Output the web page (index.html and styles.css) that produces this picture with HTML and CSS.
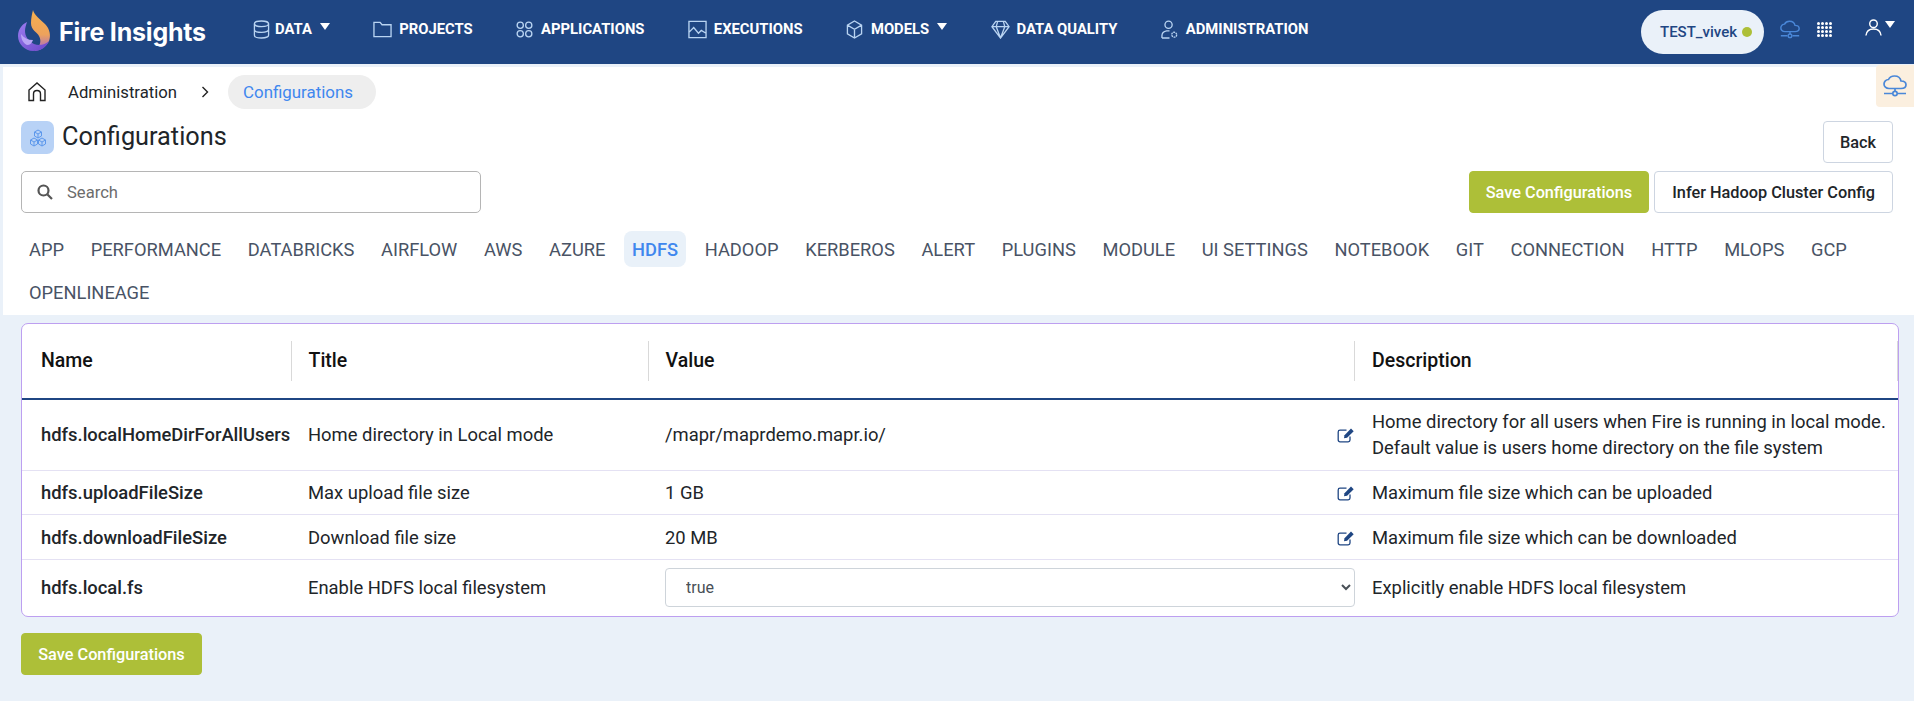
FILE: index.html
```html
<!DOCTYPE html>
<html lang="en">

<head>
	<meta charset="UTF-8">
	<title>Fire Insights - Configurations</title>
	<link rel="stylesheet" href="styles.css">
</head>

<body>
	<header class="topbar">
		<div class="brand">
			<svg class="brand__logo" viewBox="0 0 33 41" width="33" height="41">
				<defs>
					<linearGradient id="flame" x1="0" y1="0" x2="0" y2="1">
						<stop offset="0" stop-color="#f6b04e" />
						<stop offset="0.6" stop-color="#eda25c" />
						<stop offset="1" stop-color="#a065d0" />
					</linearGradient>
					<linearGradient id="blob" x1="0" y1="0" x2="1" y2="1">
						<stop offset="0" stop-color="#9a7cf0" />
						<stop offset="1" stop-color="#6b46c8" />
					</linearGradient>
				</defs>
				<path fill="url(#flame)" d="M15 0C16 5 22 9 27 14C32 19 33 26 31 31C28 37 22 41 16 41C22 37 24 31 21 26C19 22 13 20 13 13C13 8 14 4 15 0z" />
				<path fill="url(#blob)" d="M9 12C3 15 0 20 0 26C0 34 7 41 15 41C22 41 28 38 31 31C27 35 21 36 16 34C10 31 7 26 7 21C7 18 8 15 9 12z" />
				<path fill="#b9a4f5" d="M3 24C6 28 10 30 15 30C14 33 12 35 9 35C5 33 3 29 3 24z" />
			</svg>
			<span class="brand__name">Fire Insights</span>
		</div>
		<nav class="mainnav">
			<a class="mainnav__item">
				<svg class="navicon navicon--tight" viewBox="0 0 18 20"><ellipse cx="9" cy="4" rx="7.5" ry="3" /><path d="M1.500 4v12c0 1.700 3.400 3 7.500 3s7.500-1.300 7.500-3V4M1.500 10c0 1.700 3.400 3 7.500 3s7.500-1.300 7.500-3" /></svg>
				DATA<i class="caret"></i>
			</a>
			<a class="mainnav__item">
				<svg class="navicon navicon--wide" viewBox="0 0 20 20"><path d="M1 17.500V2.500h6.500l2 2.500h9.500v12.500z" /></svg>
				PROJECTS
			</a>
			<a class="mainnav__item">
				<svg class="navicon" viewBox="0 0 18 20"><circle cx="4.500" cy="5.500" r="3.300" /><circle cx="13.500" cy="5.500" r="3.300" /><circle cx="4.500" cy="14.500" r="3.300" /><circle cx="13.500" cy="14.500" r="3.300" /></svg>
				APPLICATIONS
			</a>
			<a class="mainnav__item">
				<svg class="navicon navicon--wide" viewBox="0 0 20 20"><path d="M1 1.500h18v17H1zM1 13l5-5 5 6 3-3 5 3" /></svg>
				EXECUTIONS
			</a>
			<a class="mainnav__item">
				<svg class="navicon" viewBox="0 0 18 20"><path d="M9 1l7.500 4.300v9.400L9 19l-7.500-4.300V5.300zM1.500 5.300L9 9.700l7.500-4.400M9 9.700V19" /></svg>
				MODELS<i class="caret"></i>
			</a>
			<a class="mainnav__item">
				<svg class="navicon navicon--wide" viewBox="0 0 20 20"><path d="M5 1.500h10l4 5.500-9 12L1 7zM1 7h18M7 1.500L5.500 7 10 19l4.500-12L13 1.500M5.500 7h9" /></svg>
				DATA QUALITY
			</a>
			<a class="mainnav__item">
				<svg class="navicon" viewBox="0 0 18 20"><circle cx="8" cy="5" r="3.800" /><path d="M1 19v-2.500c0-3 2.500-4.500 5-5h3M1 19h8" /><circle cx="14" cy="15.500" r="2.600" stroke-dasharray="2 0.700" /></svg>
				ADMINISTRATION
			</a>
		</nav>
		<div class="topbar__right">
			<div class="envpill">TEST_vivek<i class="envpill__dot"></i></div>
			<svg class="cloudicon" viewBox="0 0 24 22" width="20" height="19"><path d="M6 13.500c-3 0-5-2-5-4.500s2-4.500 4.500-4.500C6.500 2.300 9 1 11.500 1c3.500 0 6 2.300 6.500 5 3 0 5 1.500 5 3.800s-2 3.700-5 3.700zM12 13.500V17M1 18.500h8M15 18.500h8" /><circle cx="12" cy="18.500" r="2.200" /></svg>
			<div class="appsgrid">
				<i></i><i></i><i></i><i></i><i></i><i></i><i></i><i></i><i></i><i></i><i></i><i></i><i></i><i></i><i></i><i></i>
			</div>
			<div class="usermenu">
				<svg viewBox="0 0 18 18" width="17" height="17"><circle cx="9" cy="5" r="4" /><path d="M1 17.500c.5-4.500 3.500-7 8-7s7.500 2.500 8 7" /></svg>
				<i class="caret"></i>
			</div>
		</div>
	</header>

	<aside class="sidetab">
		<svg class="cloudicon" viewBox="0 0 24 22" width="24" height="22"><path d="M6 13.500c-3 0-5-2-5-4.500s2-4.500 4.500-4.500C6.500 2.300 9 1 11.500 1c3.500 0 6 2.300 6.500 5 3 0 5 1.500 5 3.800s-2 3.700-5 3.700zM12 13.500V17M1 18.500h8M15 18.500h8" /><circle cx="12" cy="18.500" r="2.200" /></svg>
	</aside>

	<main>
		<section class="panel">
			<div class="crumbs">
				<svg class="crumbs__home" viewBox="0 0 18 20" width="18" height="20"><path d="M1 18.500V8l8-7 8 7v10.500h-4.500V12c0-2-1.500-3.500-3.500-3.500S5.500 10 5.500 12v6.500z" /></svg>
				<span class="crumbs__link">Administration</span>
				<svg class="crumbs__sep" viewBox="0 0 8 12" width="8" height="12"><path d="M1.500 1l5 5-5 5" /></svg>
				<span class="crumbs__current">Configurations</span>
			</div>

			<div class="titlerow">
				<div class="pagetitle">
					<span class="pagetitle__icon">
						<svg viewBox="0 0 18 18" width="18" height="18"><path d="M9 1l3.500 2v4L9 9 5.500 7V3zM5 9l3.500 2v4L5 17l-3.500-2v-4zM13 9l3.500 2v4L13 17l-3.500-2v-4zM5.500 3L9 5l3.500-2M9 5v4M1.500 11L5 13l3.500-2M5 13v4M9.500 11l3.500 2 3.500-2M13 13v4" /></svg>
					</span>
					<h1>Configurations</h1>
				</div>
				<button class="btn btn--plain btn--back">Back</button>
			</div>

			<div class="toolsrow">
				<label class="searchbox">
					<svg viewBox="0 0 16 16" width="16" height="16"><circle cx="6.500" cy="6.500" r="5" /><path d="M10.500 10.500l4.500 4.500" /></svg>
					<input type="text" placeholder="Search">
				</label>
				<div class="toolsrow__btns">
					<button class="btn btn--save">Save Configurations</button>
					<button class="btn btn--plain btn--infer">Infer Hadoop Cluster Config</button>
				</div>
			</div>

			<div class="tabs">
				<a class="tabs__item">APP</a>
				<a class="tabs__item">PERFORMANCE</a>
				<a class="tabs__item">DATABRICKS</a>
				<a class="tabs__item">AIRFLOW</a>
				<a class="tabs__item">AWS</a>
				<a class="tabs__item">AZURE</a>
				<a class="tabs__item is-active">HDFS</a>
				<a class="tabs__item">HADOOP</a>
				<a class="tabs__item">KERBEROS</a>
				<a class="tabs__item">ALERT</a>
				<a class="tabs__item">PLUGINS</a>
				<a class="tabs__item">MODULE</a>
				<a class="tabs__item">UI SETTINGS</a>
				<a class="tabs__item">NOTEBOOK</a>
				<a class="tabs__item">GIT</a>
				<a class="tabs__item">CONNECTION</a>
				<a class="tabs__item">HTTP</a>
				<a class="tabs__item">MLOPS</a>
				<a class="tabs__item">GCP</a>
				<a class="tabs__item">OPENLINEAGE</a>
			</div>
		</section>

		<section class="card">
			<table class="conftable">
				<colgroup>
					<col class="col-name">
					<col class="col-title">
					<col class="col-value">
					<col class="col-desc">
				</colgroup>
				<thead>
					<tr>
						<th><div>Name</div></th>
						<th><div>Title</div></th>
						<th><div>Value</div></th>
						<th><div>Description</div></th>
					</tr>
				</thead>
				<tbody>
					<tr class="row-tall">
						<td class="cell-name">hdfs.localHomeDirForAllUsers</td>
						<td>Home directory in Local mode</td>
						<td>
							<div class="valuecell">/mapr/maprdemo.mapr.io/
								<svg class="editicon" viewBox="0 0 18 16" width="18" height="16"><path d="M13 9.500v3.500c0 1-.7 1.800-1.800 1.800H3c-1 0-1.800-.8-1.800-1.800V5c0-1 .8-1.800 1.800-1.800h6.500" /><path class="editicon__pen" d="M7 11.200l.5-3L14 1.500l2.700 2.700-6.600 6.500z" /></svg>
							</div>
						</td>
						<td>Home directory for all users when Fire is running in local mode. Default value is users home directory on the file system</td>
					</tr>
					<tr class="row-short">
						<td class="cell-name">hdfs.uploadFileSize</td>
						<td>Max upload file size</td>
						<td>
							<div class="valuecell">1 GB
								<svg class="editicon" viewBox="0 0 18 16" width="18" height="16"><path d="M13 9.500v3.500c0 1-.7 1.800-1.800 1.800H3c-1 0-1.800-.8-1.800-1.800V5c0-1 .8-1.800 1.800-1.800h6.500" /><path class="editicon__pen" d="M7 11.200l.5-3L14 1.500l2.700 2.700-6.600 6.500z" /></svg>
							</div>
						</td>
						<td>Maximum file size which can be uploaded</td>
					</tr>
					<tr class="row-short">
						<td class="cell-name">hdfs.downloadFileSize</td>
						<td>Download file size</td>
						<td>
							<div class="valuecell">20 MB
								<svg class="editicon" viewBox="0 0 18 16" width="18" height="16"><path d="M13 9.500v3.500c0 1-.7 1.800-1.800 1.800H3c-1 0-1.800-.8-1.800-1.800V5c0-1 .8-1.800 1.800-1.800h6.500" /><path class="editicon__pen" d="M7 11.200l.5-3L14 1.500l2.700 2.700-6.600 6.500z" /></svg>
							</div>
						</td>
						<td>Maximum file size which can be downloaded</td>
					</tr>
					<tr class="row-select">
						<td class="cell-name">hdfs.local.fs</td>
						<td>Enable HDFS local filesystem</td>
						<td class="cell-select">
							<select class="valueselect">
								<option>true</option>
								<option>false</option>
							</select>
						</td>
						<td>Explicitly enable HDFS local filesystem</td>
					</tr>
				</tbody>
			</table>
		</section>

		<button class="btn btn--save btn--bottom">Save Configurations</button>
	</main>
</body>

</html>
```

FILE: styles.css
```css
* {
	box-sizing: border-box;
}

body {
	margin: 0;
	height: 701px;
	overflow: hidden;
	background-color: #eaf1f9;
	color: #212529;
	font-family: Roboto, "Liberation Sans", sans-serif;
	font-size: 18.4px;
}

/* top bar */
.topbar {
	display: flex;
	align-items: center;
	height: 64px;
	background-color: #1f4683;
	color: #fff;
}

.brand {
	display: flex;
	align-items: center;
	width: 253px;
	padding-left: 18px;
	flex-shrink: 0;
}

.brand__logo {
	margin-top: -3px;
}

.brand__name {
	margin-left: 8px;
	font-family: Inter, sans-serif;
	font-size: 25px;
	font-weight: 700;
	letter-spacing: -0.2px;
}

.mainnav {
	display: flex;
	gap: 43.4px;
	margin-top: -6px;
}

.mainnav__item {
	display: flex;
	align-items: center;
	font-size: 14.8px;
	font-weight: 700;
	white-space: nowrap;
}

.navicon {
	width: 17px;
	height: 19px;
	margin-right: 8px;
	fill: none;
	stroke: #b9d4f2;
	stroke-width: 1.4;
}

.navicon--tight {
	margin-right: 5px;
}

.navicon--wide {
	width: 19px;
	margin-right: 7px;
}

.caret {
	display: inline-block;
	width: 0;
	height: 0;
	margin-left: 8px;
	margin-bottom: 5px;
	border-left: 5px solid transparent;
	border-right: 5px solid transparent;
	border-top: 7px solid #fff;
}

.topbar__right {
	display: flex;
	align-items: center;
	margin-left: auto;
	padding-right: 19px;
}

.envpill {
	display: flex;
	align-items: center;
	width: 123px;
	height: 44px;
	padding-left: 19px;
	border-radius: 22px;
	background-color: #eaf1f9;
	color: #1f4683;
	font-size: 15px;
	font-weight: 500;
	white-space: nowrap;
}

.envpill__dot {
	width: 10px;
	height: 10px;
	margin-left: 5px;
	border-radius: 50%;
	background-color: #adbf38;
}

.cloudicon {
	fill: none;
	stroke: #4a87d8;
	stroke-width: 1.7;
}

.topbar .cloudicon {
	margin-left: 16px;
	margin-top: -6px;
}

.appsgrid {
	display: grid;
	grid-template-columns: repeat(4, 3px);
	gap: 1px;
	margin-left: 17px;
	margin-top: -6px;
}

.appsgrid i {
	width: 3px;
	height: 3px;
	border-radius: 50%;
	background-color: #fff;
}

.usermenu {
	display: flex;
	align-items: center;
	margin-left: 33px;
	margin-top: -10px;
}

.usermenu svg {
	fill: none;
	stroke: #fff;
	stroke-width: 1.5;
}

.usermenu .caret {
	margin-left: 3px;
	margin-bottom: 6px;
}

/* floating tab on the right edge */
.sidetab {
	position: absolute;
	top: 65px;
	right: 0;
	display: flex;
	justify-content: center;
	align-items: center;
	width: 38px;
	height: 42px;
	border-bottom-left-radius: 4px;
	border-top-left-radius: 4px;
	background-color: #fbefdf;
}

/* white panel */
.panel {
	margin: 3px 0 0 3px;
	height: 248px;
	padding: 8px 21px 0 18px;
	background-color: #fff;
}

.crumbs {
	display: flex;
	align-items: center;
	height: 34px;
	padding-left: 7px;
}

.crumbs__home {
	fill: none;
	stroke: #222;
	stroke-width: 1.4;
}

.crumbs__link {
	margin-left: 22px;
	color: #212529;
	font-size: 16.7px;
}

.crumbs__sep {
	margin-left: 24px;
	fill: none;
	stroke: #222;
	stroke-width: 1.4;
}

.crumbs__current {
	display: flex;
	align-items: center;
	height: 34px;
	margin-left: 19px;
	padding: 0 23px 0 15px;
	border-radius: 17px;
	background-color: #eeeeee;
	color: #3f87ee;
	font-size: 16.9px;
}

.titlerow {
	display: flex;
	justify-content: space-between;
	align-items: flex-start;
	margin-top: 12px;
}

.pagetitle {
	display: flex;
	align-items: center;
	gap: 8px;
}

.pagetitle h1 {
	margin: -3px 0 0;
	color: #212529;
	font-size: 25.3px;
	font-weight: 400;
}

.pagetitle__icon {
	display: flex;
	justify-content: center;
	align-items: center;
	width: 33px;
	height: 33px;
	border-radius: 7px;
	background-color: #b8d2f6;
}

.pagetitle__icon svg {
	fill: none;
	stroke: #5d98ec;
	stroke-width: 1;
}

.btn {
	height: 42px;
	padding: 0 16px;
	border: 1px solid #cdd5e1;
	border-radius: 4px;
	background-color: #fff;
	color: #212529;
	font-family: Roboto, sans-serif;
	font-size: 16.3px;
	font-weight: 500;
	white-space: nowrap;
}

.btn--infer {
	padding: 0 17px;
}

.btn--save {
	border-color: #adbf38;
	background-color: #adbf38;
	color: #fff;
}

.toolsrow {
	display: flex;
	justify-content: space-between;
	margin-top: 8px;
}

.toolsrow__btns {
	display: flex;
	gap: 5px;
}

.searchbox {
	display: flex;
	align-items: center;
	width: 460px;
	height: 42px;
	padding-left: 15px;
	border: 1px solid #b5b5b5;
	border-radius: 5px;
}

.searchbox svg {
	flex-shrink: 0;
	fill: none;
	stroke: #555;
	stroke-width: 2.2;
}

.searchbox input {
	width: 100%;
	margin-left: 12px;
	border: 0;
	outline: 0;
	font-family: Roboto, sans-serif;
	font-size: 16.6px;
}

.searchbox input::placeholder {
	color: #6c6c6c;
}

.tabs {
	display: flex;
	flex-wrap: wrap;
	gap: 7px 10.65px;
	margin-top: 18px;
}

.tabs__item {
	display: flex;
	align-items: center;
	height: 36px;
	padding: 0 8px;
	border-radius: 8px;
	color: #495365;
	font-size: 18.3px;
	white-space: nowrap;
}

.tabs__item.is-active {
	background-color: #e9f1f9;
	color: #3f87ee;
	font-weight: 500;
}

/* table */
.card {
	margin: 8px 15px 0 21px;
	height: 294px;
	border: 1px solid #bd9ff0;
	border-radius: 7px;
	background-color: #fff;
	overflow: hidden;
}

.conftable {
	width: 100%;
	border-collapse: collapse;
	table-layout: fixed;
}

.col-name {
	width: 270px;
}

.col-title {
	width: 357px;
}

.col-value {
	width: 706px;
}

.conftable th {
	height: 75px;
	padding: 0;
	border-bottom: 2px solid #1f4683;
	color: #111;
	font-size: 19.5px;
	font-weight: 500;
	text-align: left;
}

.conftable th div {
	height: 40px;
	padding-left: 16.5px;
	border-right: 1px solid #d9d9d9;
	line-height: 40px;
}

.conftable th:first-child div {
	padding-left: 19px;
}

.conftable th:last-child div {
	padding-left: 17px;
}

.conftable td {
	height: 44px;
	padding: 0 8px 0 16px;
	border-bottom: 1px solid #e4e1f3;
	line-height: 26px;
}

.conftable td:last-child {
	padding-left: 17px;
}

.conftable tr:last-child td {
	border-bottom: 0;
}

.conftable .row-tall td {
	height: 71px;
}

.conftable .row-short td {
	padding-top: 2px;
}

.conftable .row-short + .row-short td {
	height: 45px;
}

.conftable .row-select td {
	height: 57px;
}

.conftable .cell-name {
	padding-right: 0;
	padding-left: 19px;
	font-weight: 500;
	white-space: nowrap;
}

.conftable td:nth-child(3) {
	padding-right: 0;
}

.valuecell {
	display: flex;
	justify-content: space-between;
	align-items: center;
}

.editicon {
	fill: none;
	stroke: #1f4683;
	stroke-width: 1.300;
}

.editicon__pen {
	fill: #1f4683;
	stroke: none;
}

.valueselect {
	width: 100%;
	height: 39px;
	padding-left: 16px;
	border: 1px solid #ced4da;
	border-radius: 4px;
	background-color: #fff;
	color: #495057;
	font-family: Roboto, sans-serif;
	font-size: 16px;
}

.btn--bottom {
	display: block;
	width: 181px;
	margin: 16px 0 0 21px;
	padding: 0;
}
```
